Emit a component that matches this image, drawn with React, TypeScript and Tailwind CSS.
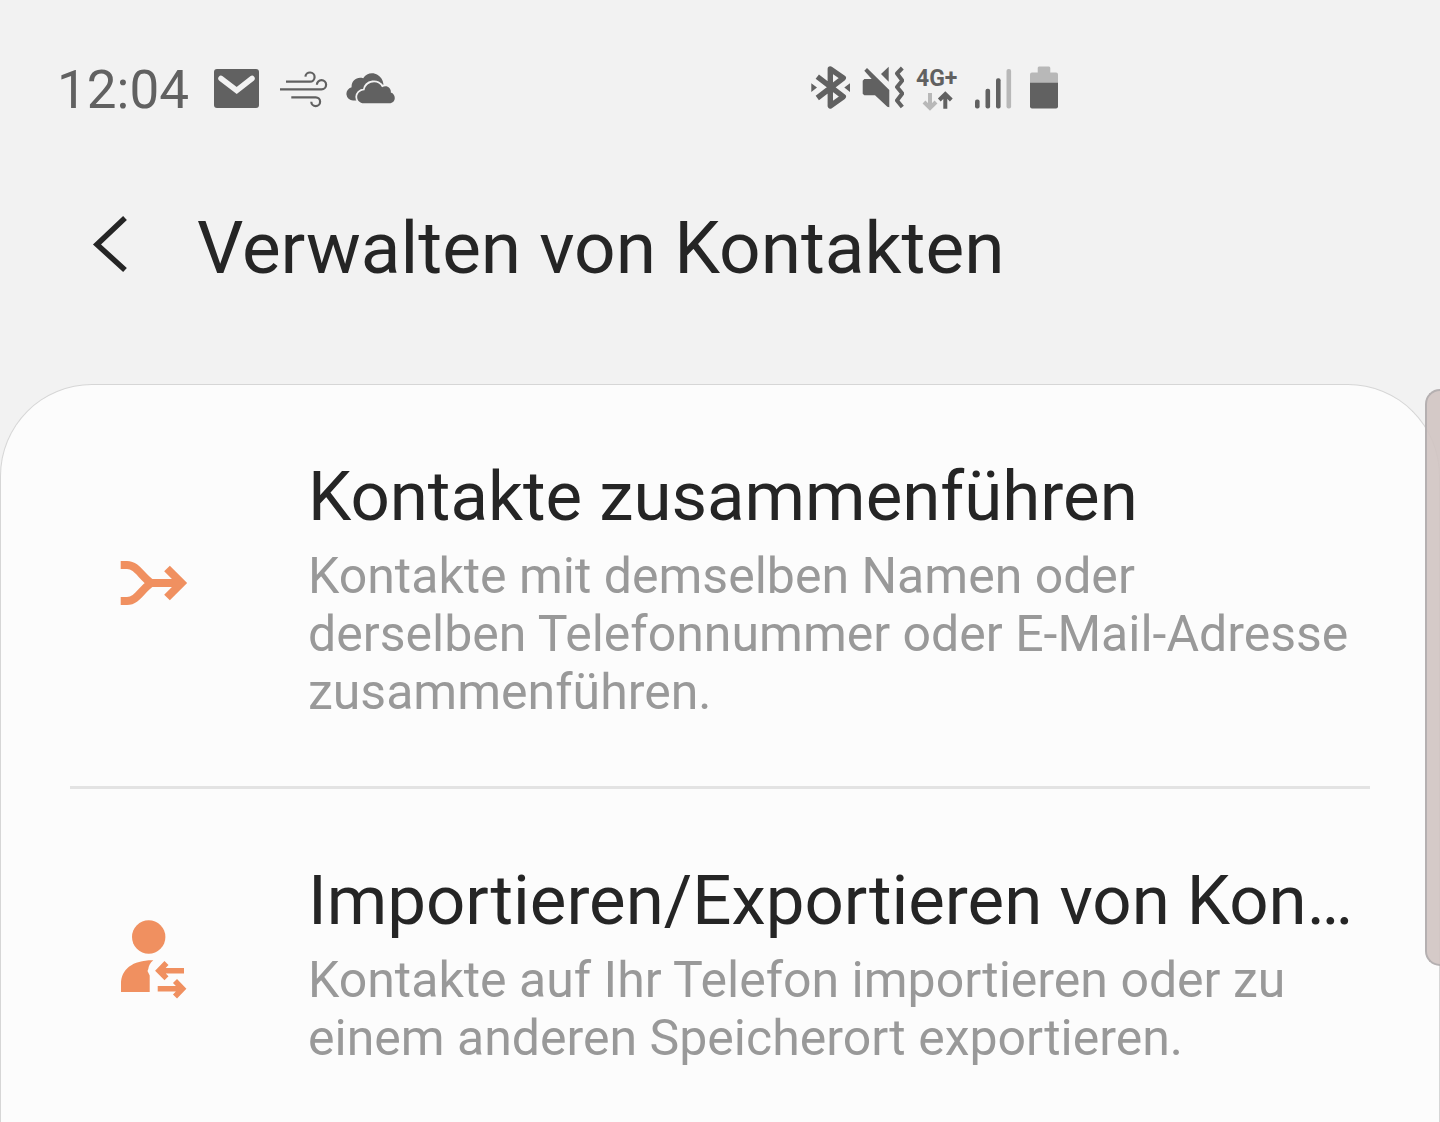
import type { ReactNode } from "react";

const MailIcon = () => (
  <svg className="h-12 w-[50px]" viewBox="0 0 50 48" fill="none" aria-hidden="true">
    <rect y="5" width="45" height="39" rx="3" fill="#616161" />
    <path d="M7 14.5 22.7 26.5 38 14.5" stroke="#f2f2f2" strokeWidth="5.5" strokeLinecap="round" />
  </svg>
);

const WindIcon = () => (
  <svg className="h-12 w-[50px]" viewBox="0 0 50 48" fill="none" stroke="#616161" strokeWidth="2.2" aria-hidden="true">
    <path d="M6 17.7H30a4.6 4.6 0 1 0-4.6-5" />
    <path d="M0 25.3H41.5a4.6 4.6 0 1 0-4.6-4.6" />
    <path d="M11.3 33.3H35.7a4.4 4.4 0 1 1-4.4 4.4" />
  </svg>
);

const CloudIcon = () => (
  <svg className="h-12 w-[50px]" viewBox="0 0 50 48" fill="#616161" aria-hidden="true">
    <path d="M7 36.6A6.8 6.8 0 0 1 5.6 23.2C5.2 16.5 11 12.2 17.2 14.2 20.5 9 27 8 31.8 11 35 13 37 16 37.4 20V36.6Z" />
    <path
      d="M18 39.3C8.8 39.3 8.8 26.6 18.5 26.2 20 17.2 32.6 15.4 36 23.2 41.5 20.6 45.4 24.6 44.8 28.6 50.6 30.4 50 39.3 43.3 39.3Z"
      stroke="#f2f2f2"
      strokeWidth="3.6"
      paintOrder="stroke"
    />
  </svg>
);

const BluetoothIcon = () => (
  <svg className="h-12 w-10" viewBox="0 0 40 48" fill="none" aria-hidden="true">
    <path
      d="M7.3 12.7 33.3 32.7 20.3 42V5L33.3 14 7.3 34"
      stroke="#616161"
      strokeWidth="5.4"
      strokeLinejoin="round"
    />
    <path d="M1.3 19.3 7 23.5 1.3 28ZM34.3 23.5 40 19.3V28Z" fill="#616161" />
  </svg>
);

const VibrateIcon = () => (
  <svg className="h-12 w-[42px]" viewBox="0 0 42 48" fill="none" aria-hidden="true">
    <path
      d="M.7 16.7 2.3 15H9.7L2.3 6.7 5 4 27.3 26V43.3L25.3 42.7 13 31.3H2.3L.7 29.7ZM19 10 26.7 2.7V17.7Z"
      fill="#616161"
    />
    <path
      d="M40.3 4 35 9.5 40.3 16.5 35 23 40.3 29.5 35 36.5 40.3 43"
      stroke="#616161"
      strokeWidth="4"
      strokeLinejoin="round"
    />
  </svg>
);

const NetworkType = () => (
  <div className="flex h-12 w-[46px] flex-col pt-[3px]">
    <span className="text-[23px] leading-[23px] font-bold text-[#616161]">4G+</span>
    <svg className="h-[22px] w-[42px]" viewBox="0 0 42 22" fill="none" strokeWidth="4" aria-hidden="true">
      <path d="M14 3V18M8 12 14 18 20 12" stroke="#b8b8b8" />
      <path d="M29.3 18.700V4M23.300 10 29.300 4 35.300 10" stroke="#616161" />
    </svg>
  </div>
);

const SignalIcon = () => (
  <svg className="h-12 w-11" viewBox="0 0 44 48" fill="#616161" aria-hidden="true">
    <rect x="1" y="35.5" width="4.6" height="9" rx="2" />
    <rect x="11.5" y="24.7" width="4.6" height="19.8" rx="2" />
    <rect x="22" y="14.3" width="4.6" height="30.2" rx="2" />
    <rect x="32.5" y="5" width="4.6" height="39.5" rx="2" fill="#b8b8b8" />
  </svg>
);

const BatteryIcon = () => (
  <svg className="h-12 w-7" viewBox="0 0 28 48" aria-hidden="true">
    <path d="M0 19V10.5Q0 8.5 2 8.5H7.7V4Q7.7 2.5 9 2.5H19Q20.3 2.5 20.3 4V8.5H26Q28 8.5 28 10.5V19Z" fill="#b8b8b8" />
    <path d="M0 18.7H28V42.5Q28 44.6 26 44.6H2Q0 44.6 0 42.5Z" fill="#616161" />
  </svg>
);

const MergeIcon = () => (
  <svg className="h-[88px] w-[72px]" viewBox="0 0 72 88" fill="none" stroke="#f09060" strokeWidth="8" aria-hidden="true">
    <path d="M3.7 20H10C20 20 24 31 34 38 24 45 20 56 10 56H3.7" />
    <path d="M32 38H64M50 23.5 64.5 38 50 52.5" />
  </svg>
);

const ImportExportIcon = () => (
  <svg className="h-[88px] w-[72px]" viewBox="0 0 72 88" fill="none" aria-hidden="true">
    <circle cx="31.7" cy="17" r="16.7" fill="#f09060" />
    <path d="M4 72V64C4 49 16 40 36.3 40.3 33 43 31.7 46 31.3 49L30.5 51 32.7 55.5V72Z" fill="#f09060" />
    <path
      d="M67 50.7H42M49.5 43 42 50.7 49.5 58.3M40.7 68.7H65M58 61 65.5 68.7 58 76.5"
      stroke="#f09060"
      strokeWidth="5.6"
    />
  </svg>
);

const StatusBar = () => (
  <div className="flex h-28 shrink-0 items-end justify-between pr-[382px] pl-[57px]">
    <div className="flex items-center gap-4">
      <time className="mr-[9px] pt-1 text-[53px] leading-[44px] text-[#616161]">12:04</time>
      <MailIcon />
      <WindIcon />
      <CloudIcon />
    </div>
    <div className="flex items-center gap-3">
      <BluetoothIcon />
      <VibrateIcon />
      <NetworkType />
      <SignalIcon />
      <BatteryIcon />
    </div>
  </div>
);

type MenuItemProps = {
  icon: ReactNode;
  title: string;
  description: string;
};

const MenuItem = ({ icon, title, description }: MenuItemProps) => (
  <li>
    <button
      type="button"
      className="flex w-full items-center gap-[119px] pt-[72px] pr-[78px] pb-[65px] pl-[116px] text-left"
    >
      <span className="shrink-0">{icon}</span>
      <span className="min-w-0 flex-1">
        <span className="block truncate text-[69px] leading-[80px] text-[#252525]">{title}</span>
        <span className="mt-[10px] block text-[50px] leading-[58px] text-[#999999]">{description}</span>
      </span>
    </button>
  </li>
);

export default function App() {
  return (
    <div className="flex h-screen flex-col overflow-hidden bg-[#f2f2f2] font-[Roboto,sans-serif]">
      <StatusBar />
      <header className="flex h-[272px] shrink-0 items-start pt-[90px] pl-[88px]">
        <button type="button" aria-label="Zurück" className="flex h-[84px] w-[109px] items-center">
          <svg className="h-16 w-11" viewBox="0 0 44 64" fill="none" stroke="#252525" strokeWidth="5.5" aria-hidden="true">
            <path d="M37 6 9 32.5 37 58" />
          </svg>
        </button>
        <h1 className="text-[73px] leading-[92px] text-[#252525]">Verwalten von Kontakten</h1>
      </header>
      <main className="relative flex-1 shrink-0">
        <ul className="min-h-full rounded-t-[92px] border border-b-0 border-[#d6d6d6] bg-[#fcfcfc]">
          <MenuItem
            icon={<MergeIcon />}
            title="Kontakte zusammenführen"
            description="Kontakte mit demselben Namen oder derselben Telefonnummer oder E-Mail-Adresse zusammenführen."
          />
          <li role="separator" className="mx-[69px] h-[3px] bg-[#e3e3e3]" />
          <MenuItem
            icon={<ImportExportIcon />}
            title="Importieren/Exportieren von Kontakten"
            description="Kontakte auf Ihr Telefon importieren oder zu einem anderen Speicherort exportieren."
          />
        </ul>
        {/* edge panel handle */}
        <div className="absolute top-[5px] right-0 h-[577px] w-[15px] rounded-l-[18px] border-2 border-r-0 border-[#b5b0b1] bg-[#d0c4c2]/90" />
      </main>
    </div>
  );
}
